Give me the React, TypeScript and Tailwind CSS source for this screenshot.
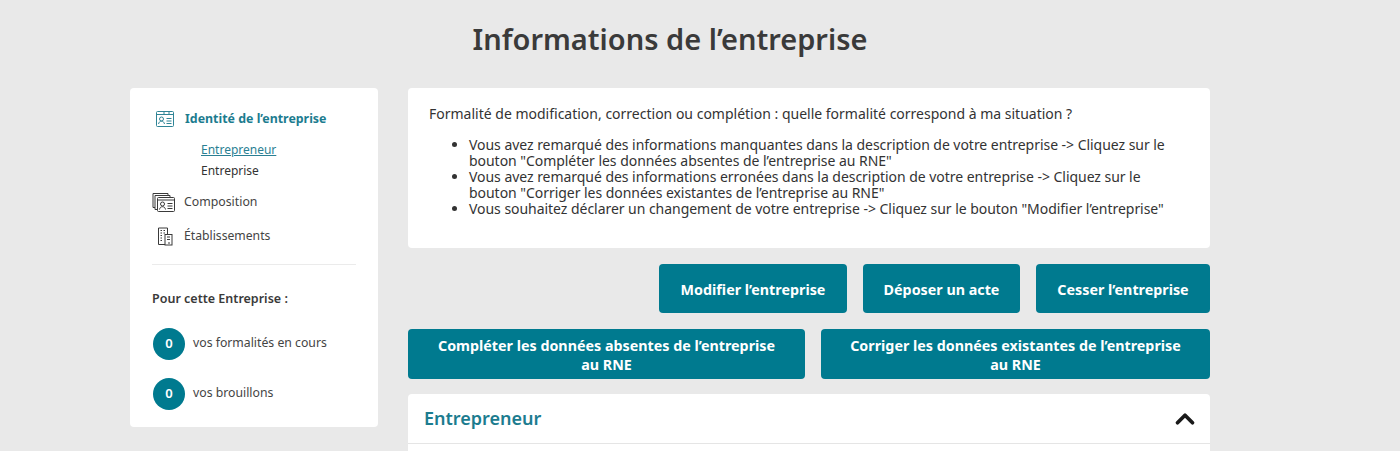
import { ChevronUp } from 'lucide-react';

const teal = 'bg-[#007A8F]';

const IdCardIcon = () => (
  <svg width="20" height="18" viewBox="0 0 20 18" fill="none" stroke="#2f8496" strokeWidth="1">
    <rect x="1.5" y="1.5" width="17" height="15" rx="1" />
    <path d="M1.5 4.5h17M9 1.5v3M14 1.5v3" />
    <circle cx="6.5" cy="9" r="2" />
    <path d="M3.5 14c.5-2 1.5-2.800 3-2.800s2.500.8 3 2.800M11.500 8.500h5M11.500 11h5M11.500 13.500h5" />
  </svg>
);

const CompositionIcon = () => (
  <svg width="23" height="21" viewBox="0 0 23 21" fill="none" stroke="#3a3a3a" strokeWidth="1">
    <path d="M3 15.500H1V1.500h15v2" />
    <path d="M5 17.500H3V3.500h15v2" />
    <rect x="5.500" y="5.500" width="17" height="14" rx="1" fill="#fff" />
    <path d="M5.500 8h17" />
    <circle cx="10.500" cy="12" r="2" />
    <path d="M7.500 17.500c.4-2 1.500-2.800 3-2.800s2.600.8 3 2.800M15.500 11.500h5M15.500 14h5M15.500 16.500h5" />
  </svg>
);

const BuildingIcon = () => (
  <svg width="16" height="19" viewBox="0 0 16 19" fill="none" stroke="#3a3a3a" strokeWidth="1">
    <path d="M8 17.500H1.500V1h9v6" />
    <path d="M3.500 3.500h1.500M6.500 3.500h1.500M3.500 6h1.500M6.500 6h1.500M3.500 8.500h1.500M3.500 11h1.500M3.500 13.500h1.500" />
    <rect x="8" y="7.500" width="7" height="10.500" fill="#fff" />
    <path d="M10 10h3M10 12.500h3M12 15v2" />
  </svg>
);

const Counter = ({ label }: { label: string }) => (
  <div className="flex items-center gap-2">
    <div className={`ml-px flex h-8 w-8 items-center justify-center rounded-full text-[13px] font-semibold text-white ${teal}`}>
      0
    </div>
    <span className="text-[12.25px] text-[#444]">{label}</span>
  </div>
);

const ActionButton = ({ className, children }: { className: string; children: React.ReactNode }) => (
  <button className={`flex items-center justify-center rounded pt-px text-center text-[14.3px] leading-[19px] font-bold text-white ${teal} ${className}`}>
    {children}
  </button>
);

export default function App() {
  return (
    <div className="h-[451px] overflow-hidden bg-[#E9E9E9] font-['Noto_Sans','Open_Sans',sans-serif] text-[#333]">
      <div className="ml-[130px] w-[1080px]">
        <h1 className="pt-[18px] pb-[28px] text-center text-[29px] leading-[42px] font-semibold text-[#3a3a3a]">
          Informations de l’entreprise
        </h1>

        <div className="flex items-start justify-between">
          <aside className="h-[339px] w-[248px] rounded-sm bg-white pt-[22px] pr-[22px] pl-[22px]">
            <div className="flex items-center gap-[10px] pl-[3px]">
              <IdCardIcon />
              <span className="text-[12.4px] font-bold text-[#1C7C8F]">Identité de l’entreprise</span>
            </div>
            <div className="mt-[10px] ml-[49px] flex flex-col text-[12px] leading-[21px]">
              <a className="text-[#2a7f93] underline">Entrepreneur</a>
              <a className="text-[#333]">Entreprise</a>
            </div>
            <div className="mt-[11px] flex items-center gap-[9px]">
              <CompositionIcon />
              <span className="text-[12.3px] text-[#444]">Composition</span>
            </div>
            <div className="mt-[14px] flex items-center gap-[11px] pl-[5px]">
              <BuildingIcon />
              <span className="text-[12.2px] text-[#444]">Établissements</span>
            </div>
            <hr className="mt-[18px] border-[#EBEBEB]" />
            <p className="mt-[25px] text-[12.5px] leading-[18px] font-semibold text-[#3a3a3a]">Pour cette Entreprise :</p>
            <div className="mt-[20px] flex flex-col gap-[18px]">
              <Counter label="vos formalités en cours" />
              <Counter label="vos brouillons" />
            </div>
          </aside>

          <main className="flex w-[802px] flex-col">
            <section className="h-[160px] rounded-sm bg-white pt-[16px] pr-[30px] pl-[21px] text-[14px] leading-[16px] text-[#333]">
              <p className="leading-[20px]">Formalité de modification, correction ou complétion : quelle formalité correspond à ma situation ?</p>
              <ul className="mt-[13px] list-disc pl-[40px] tracking-[-0.04px]">
                <li>Vous avez remarqué des informations manquantes dans la description de votre entreprise -&gt; Cliquez sur le bouton "Compléter les données absentes de l’entreprise au RNE"</li>
                <li>Vous avez remarqué des informations erronées dans la description de votre entreprise -&gt; Cliquez sur le bouton "Corriger les données existantes de l’entreprise au RNE"</li>
                <li>Vous souhaitez déclarer un changement de votre entreprise -&gt; Cliquez sur le bouton "Modifier l’entreprise"</li>
              </ul>
            </section>

            <div className="mt-4 flex justify-end gap-4">
              <ActionButton className="h-[49px] w-[188px]">Modifier l’entreprise</ActionButton>
              <ActionButton className="h-[49px] w-[157px]">Déposer un acte</ActionButton>
              <ActionButton className="h-[49px] w-[174px]">Cesser l’entreprise</ActionButton>
            </div>

            <div className="mt-4 flex gap-4">
              <ActionButton className="h-[50px] w-[397px] px-6">Compléter les données absentes de l’entreprise au RNE</ActionButton>
              <ActionButton className="h-[50px] w-[389px] px-6">Corriger les données existantes de l’entreprise au RNE</ActionButton>
            </div>

            <div className="mt-[15px] flex h-[50px] items-center justify-between rounded-t-sm border-b border-[#E5E5E5] bg-white pr-[10px] pl-4">
              <h2 className="text-[18px] font-semibold text-[#1C7C8F]">Entrepreneur</h2>
              <ChevronUp className="h-[30px] w-[30px] text-[#1a1a1a]" strokeWidth={3} />
            </div>
            <div className="h-10 bg-white" />
          </main>
        </div>
      </div>
    </div>
  );
}
